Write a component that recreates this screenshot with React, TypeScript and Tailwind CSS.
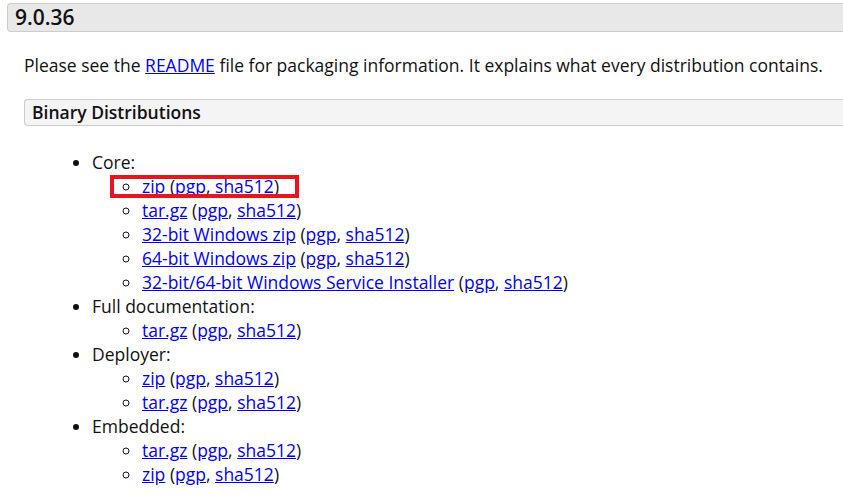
import React from "react";

function Sub({ label, boxed }: { label: string; boxed?: boolean }) {
  return (
    <li className="relative">
      {boxed && (
        <span className="absolute -left-[32px] top-[1px] h-[23px] w-[189px] border-[4px] border-[#e8141e]" />
      )}
      <a href="#" className="text-[#0000ee] underline">
        {label}
      </a>{" "}
      (
      <a href="#" className="text-[#0000ee] underline">
        pgp
      </a>
      ,{" "}
      <a href="#" className="text-[#0000ee] underline">
        sha512
      </a>
      )
    </li>
  );
}

const groups: { title: string; items: string[] }[] = [
  {
    title: "Core:",
    items: [
      "zip",
      "tar.gz",
      "32-bit Windows zip",
      "64-bit Windows zip",
      "32-bit/64-bit Windows Service Installer",
    ],
  },
  { title: "Full documentation:", items: ["tar.gz"] },
  { title: "Deployer:", items: ["zip", "tar.gz"] },
  { title: "Embedded:", items: ["tar.gz", "zip"] },
];

export default function App() {
  return (
    <div className="min-h-[497px] w-[843px] overflow-hidden bg-white pt-[3px] font-['Open_Sans',sans-serif] text-[17.5px] text-[#111]">
      <div className="ml-[7px] flex h-[29px] items-center rounded-l-[4px] border border-r-0 border-[#cccccc] bg-[#e8e8e8] pl-[7px] text-[21px] font-semibold">
        9.0.36
      </div>
      <p className="ml-[24px] mt-[21px] leading-6">
        Please see the{" "}
        <a href="#" className="text-[#0000ee] underline">
          README
        </a>{" "}
        file for packaging information. It explains what every distribution contains.
      </p>
      <div className="ml-[24px] mt-[22px] flex h-[27px] items-center rounded-l-[4px] border border-r-0 border-[#cccccc] bg-[#f4f4f4] pl-[7px] text-[17.5px] font-semibold">
        Binary Distributions
      </div>
      <ul className="ml-[92px] mt-[24px] list-disc leading-6">
        {groups.map((g) => (
          <li key={g.title}>
            {g.title}
            <ul className="ml-[50px] list-[circle]">
              {g.items.map((it, i) => (
                <Sub key={it + i} label={it} boxed={g.title === "Core:" && i === 0} />
              ))}
            </ul>
          </li>
        ))}
      </ul>
    </div>
  );
}
